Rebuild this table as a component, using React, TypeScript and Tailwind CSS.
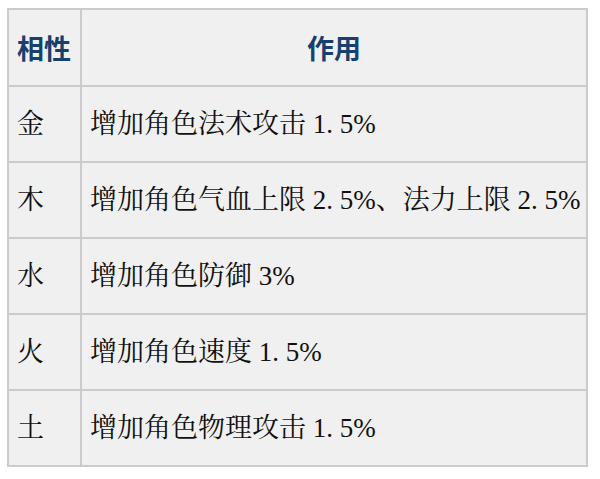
const rows = [
  { key: '金', effect: '增加角色法术攻击 1. 5%' },
  { key: '木', effect: '增加角色气血上限 2. 5%、法力上限 2. 5%' },
  { key: '水', effect: '增加角色防御 3%' },
  { key: '火', effect: '增加角色速度 1. 5%' },
  { key: '土', effect: '增加角色物理攻击 1. 5%' },
]

const serif = 'font-["Liberation_Serif","Noto_Serif_CJK_SC","Noto_Sans_CJK_SC",serif]'

export default function App() {
  return (
    <div className="w-[600px] h-[479px] bg-white pt-[8px] pl-[7px]">
      <table className="w-[581px] border-collapse border-2 border-[#cbcbcb] bg-[#f0f0f0] text-[27px] leading-none">
        <thead>
          <tr className="h-[77px]">
            <th className="w-[73px] border-2 border-[#cbcbcb] pl-[8px] text-left font-bold text-[#17406f] font-['Noto_Sans_CJK_SC',sans-serif]">
              相性
            </th>
            <th className="border-2 border-[#cbcbcb] text-center font-bold text-[#17406f] font-['Noto_Sans_CJK_SC',sans-serif]">
              作用
            </th>
          </tr>
        </thead>
        <tbody>
          {rows.map((r) => (
            <tr key={r.key} className="h-[76px]">
              <td className={`border-2 border-[#cbcbcb] pl-[8px] text-[#111] ${serif}`}>{r.key}</td>
              <td className={`border-2 border-[#cbcbcb] pl-[8px] text-[#111] whitespace-nowrap ${serif}`}>{r.effect}</td>
            </tr>
          ))}
        </tbody>
      </table>
    </div>
  )
}
